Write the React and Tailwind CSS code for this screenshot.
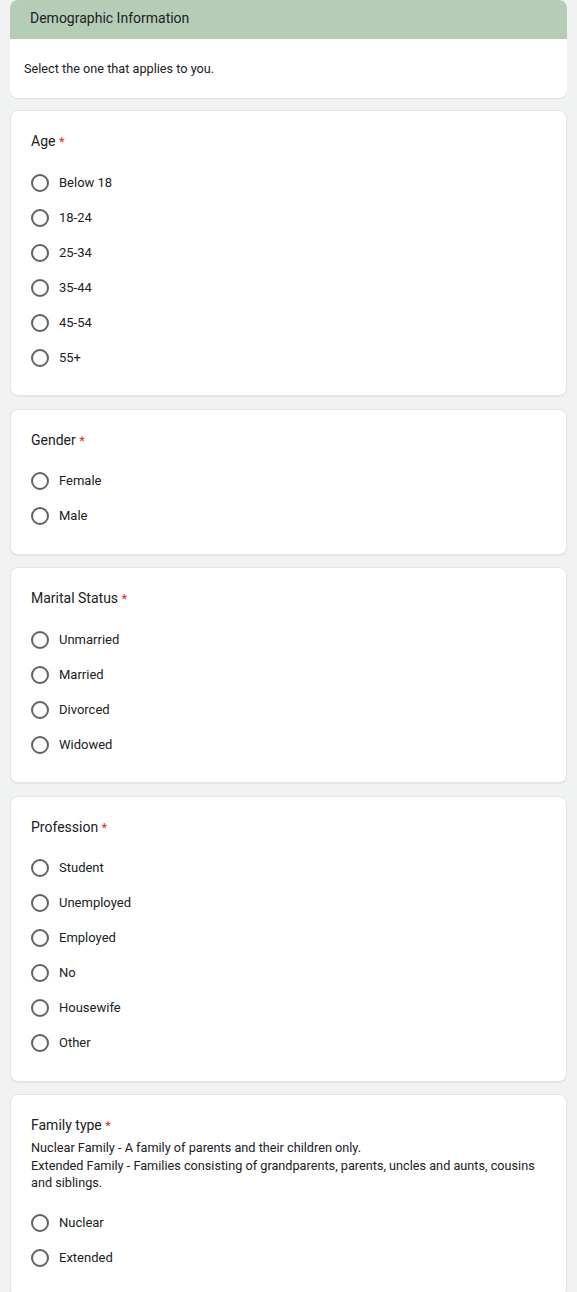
import React from "react";

const sections = [
  { title: "Age", options: ["Below 18", "18-24", "25-34", "35-44", "45-54", "55+"] },
  { title: "Gender", options: ["Female", "Male"] },
  { title: "Marital Status", options: ["Unmarried", "Married", "Divorced", "Widowed"] },
  {
    title: "Profession",
    options: ["Student", "Unemployed", "Employed", "No", "Housewife", "Other"],
  },
  {
    title: "Family type",
    description: [
      "Nuclear Family - A family of parents and their children only.",
      "Extended Family - Families consisting of grandparents, parents, uncles and aunts, cousins and siblings.",
    ],
    options: ["Nuclear", "Extended"],
  },
];

function Radio({ label }) {
  return (
    <label className="flex items-center h-[35px] cursor-pointer">
      <span className="w-[18px] h-[18px] rounded-full border-2 border-[#5f6368] shrink-0" />
      <span className="ml-[10px] text-[13px] text-[#202124]">{label}</span>
    </label>
  );
}

function Question({ title, description, options }) {
  return (
    <div className="bg-white rounded-lg border border-[#e3e6e4] shadow-[0_1px_1px_rgba(0,0,0,0.06)] px-[20px] pt-[20px] pb-[20px]">
      <div className="h-[20px] text-[14px] leading-[20px] text-[#202124]">
        {title} <span className="text-[13px] text-[#d93025]">*</span>
      </div>
      {description && (
        <div className="mt-[4px] text-[12.7px] leading-[17.5px] text-[#202124]">
          {description.map((d) => (
            <div key={d}>{d}</div>
          ))}
        </div>
      )}
      <div className="mt-[14px] flex flex-col">
        {options.map((o) => (
          <Radio key={o} label={o} />
        ))}
      </div>
    </div>
  );
}

export default function App() {
  return (
    <div
      className="min-h-screen bg-[#f0f3f1] px-[10px] pb-8"
      style={{ fontFamily: "Roboto, 'Liberation Sans', sans-serif" }}
    >
      <div className="flex flex-col gap-[11px]">
        <div className="bg-white rounded-lg overflow-hidden shadow-[0_1px_1px_rgba(0,0,0,0.08)]">
          <div className="h-[39px] bg-[#b5cdb7] flex items-center px-[20px] pb-[2px] text-[14px] text-[#202124]">
            Demographic Information
          </div>
          <div className="h-[59px] flex items-center px-[14px] text-[12.7px] text-[#202124]">
            Select the one that applies to you.
          </div>
        </div>
        <div className="flex flex-col gap-[12.5px] mt-px">
          {sections.map((s) => (
            <Question key={s.title} {...s} />
          ))}
        </div>
      </div>
    </div>
  );
}
